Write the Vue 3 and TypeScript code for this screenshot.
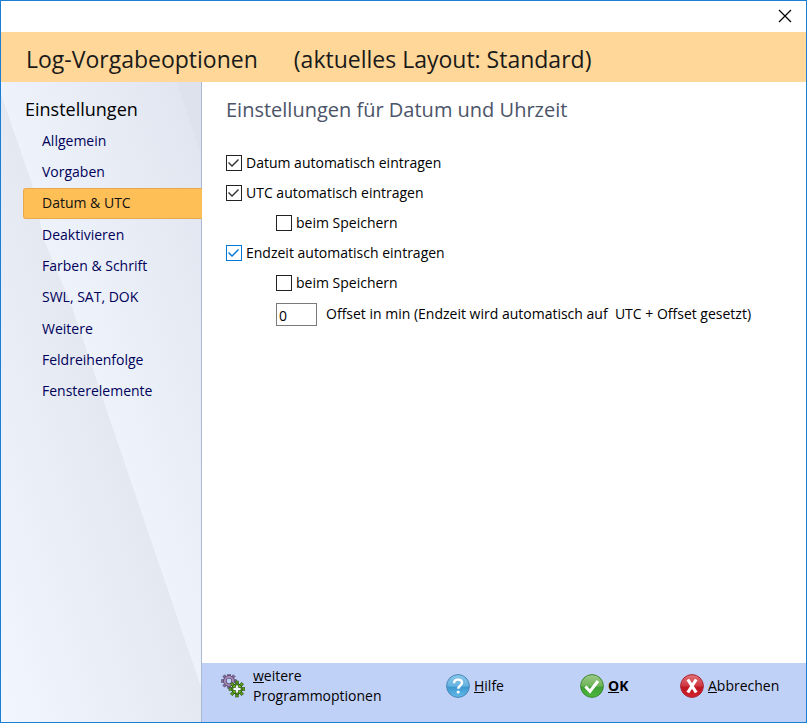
<script setup lang="ts">
import { ref } from 'vue'

const sections: string[] = [
  'Allgemein',
  'Vorgaben',
  'Datum & UTC',
  'Deaktivieren',
  'Farben & Schrift',
  'SWL, SAT, DOK',
  'Weitere',
  'Feldreihenfolge',
  'Fensterelemente',
]
const active = ref('Datum & UTC')

const autoDate = ref(true)
const autoUtc = ref(true)
const utcOnSave = ref(false)
const autoEnd = ref(true)
const endOnSave = ref(false)
const offset = ref('0')

const teeth: number[] = [0, 45, 90, 135, 180, 225, 270, 315]
</script>

<template>
  <div class="window">
    <div class="titlebar">
      <button class="close" type="button" aria-label="Schließen">
        <svg width="14" height="14" viewBox="0 0 14 14">
          <path d="M1 1L13 13M13 1L1 13" stroke="#000" stroke-width="1.2" fill="none" />
        </svg>
      </button>
    </div>

    <header class="banner">
      <h1>Log-Vorgabeoptionen</h1>
      <span>(aktuelles Layout: Standard)</span>
    </header>

    <div class="body">
      <aside class="sidebar">
        <svg class="backdrop" viewBox="0 0 200 640" preserveAspectRatio="none" aria-hidden="true">
          <defs>
            <linearGradient id="right" gradientUnits="userSpaceOnUse" x1="66" y1="210" x2="250" y2="148">
              <stop offset="0" stop-color="#edf2fb" />
              <stop offset="1" stop-color="#e0e4ee" />
            </linearGradient>
            <linearGradient id="left" gradientUnits="userSpaceOnUse" x1="-64" y1="452" x2="126" y2="388">
              <stop offset="0" stop-color="#f1f6ff" />
              <stop offset="1" stop-color="#e4e8f1" />
            </linearGradient>
          </defs>
          <rect width="200" height="640" fill="url(#right)" />
          <path d="M176 0H200V73Z" fill="#dde2ec" />
          <path d="M0 12L31 102L43 158L71 225L126 388L200 605V640H0Z" fill="url(#left)" />
        </svg>
        <h2>Einstellungen</h2>
        <nav>
          <a
            v-for="s in sections"
            :key="s"
            href="#"
            :class="{ active: s === active }"
            @click.prevent="active = s"
          >{{ s }}</a>
        </nav>
      </aside>

      <div class="content">
        <main>
          <h2>Einstellungen für Datum und Uhrzeit</h2>
          <form class="options" @submit.prevent>
            <label class="row"><input v-model="autoDate" type="checkbox" />Datum automatisch eintragen</label>
            <label class="row"><input v-model="autoUtc" type="checkbox" />UTC automatisch eintragen</label>
            <label class="row sub"><input v-model="utcOnSave" type="checkbox" />beim Speichern</label>
            <label class="row hot"><input v-model="autoEnd" type="checkbox" />Endzeit automatisch eintragen</label>
            <label class="row sub"><input v-model="endOnSave" type="checkbox" />beim Speichern</label>
            <div class="row sub offset">
              <input id="offset" v-model="offset" type="text" />
              <label for="offset">Offset in min (Endzeit wird automatisch auf&nbsp; UTC + Offset gesetzt)</label>
            </div>
          </form>
        </main>

        <footer>
          <button class="more" type="button">
            <svg width="24" height="24" viewBox="0 0 24 24">
              <g transform="translate(8 7)">
                <rect v-for="a in teeth" :key="a" x="-1.3" y="-7.5" width="2.6" height="4" fill="#86709a" stroke="#55436a" stroke-width=".6" :transform="`rotate(${a})`" />
                <circle r="4.1" fill="none" stroke="#55436a" stroke-width="3.4" />
                <circle r="4.1" fill="none" stroke="#a58cb8" stroke-width="2" />
              </g>
              <g transform="translate(16 15)">
                <rect v-for="a in teeth" :key="a" x="-1.4" y="-8" width="2.8" height="4" fill="#5a9a24" stroke="#2f5413" stroke-width=".6" :transform="`rotate(${a})`" />
                <circle r="5.2" fill="#6fc01c" stroke="#2f5413" stroke-width="1" />
                <path d="M-1.5 -4H1.5V-1.5H4V1.5H1.5V4H-1.5V1.5H-4V-1.5H-1.5Z" fill="#eef5ff" stroke="#2c5210" stroke-width=".7" />
              </g>
            </svg>
            <span><u>w</u>eitere<br />Programmoptionen</span>
          </button>

          <button type="button">
            <svg width="24" height="24" viewBox="0 0 24 24">
              <defs>
                <linearGradient id="blue" x1="0" y1="0" x2="0" y2="1">
                  <stop offset="0" stop-color="#8cc9ec" />
                  <stop offset=".5" stop-color="#65b3e0" />
                  <stop offset=".55" stop-color="#3d98d0" />
                  <stop offset="1" stop-color="#62bbe8" />
                </linearGradient>
              </defs>
              <circle cx="12" cy="12" r="11.4" fill="url(#blue)" stroke="#4886b5" />
              <path d="M8 9.2C8.1 6.8 9.7 5.6 12 5.6C14.3 5.6 16 6.9 16 8.8C16 11.4 12.3 11.6 12.3 14.8" fill="none" stroke="#fff" stroke-width="2.4" />
              <circle cx="12.2" cy="18" r="1.6" fill="#fff" />
            </svg>
            <span><u>H</u>ilfe</span>
          </button>

          <button class="ok" type="button">
            <svg width="24" height="24" viewBox="0 0 24 24">
              <defs>
                <linearGradient id="green" x1="0" y1="0" x2="0" y2="1">
                  <stop offset="0" stop-color="#9fca8a" />
                  <stop offset=".5" stop-color="#6eb457" />
                  <stop offset=".55" stop-color="#3f9f35" />
                  <stop offset="1" stop-color="#4db83c" />
                </linearGradient>
              </defs>
              <circle cx="12" cy="12" r="11.4" fill="url(#green)" stroke="#3f8a3a" />
              <path d="M5.5 12.5L10 17.5L18 7" fill="none" stroke="#fff" stroke-width="3" />
            </svg>
            <span><u>O</u>K</span>
          </button>

          <button type="button">
            <svg width="24" height="24" viewBox="0 0 24 24">
              <defs>
                <linearGradient id="red" x1="0" y1="0" x2="0" y2="1">
                  <stop offset="0" stop-color="#e2747b" />
                  <stop offset=".5" stop-color="#cf3640" />
                  <stop offset=".55" stop-color="#bd1722" />
                  <stop offset="1" stop-color="#d3222b" />
                </linearGradient>
              </defs>
              <circle cx="12" cy="12" r="11.4" fill="url(#red)" stroke="#a82732" />
              <path d="M7.8 5.5L16.2 18.5M16.2 5.5L7.8 18.5" fill="none" stroke="#fff" stroke-width="3.2" />
            </svg>
            <span><u>A</u>bbrechen</span>
          </button>
        </footer>
      </div>
    </div>
  </div>
</template>

<style>
body {
  margin: 0;
}
</style>

<style scoped>
.window {
  display: flex;
  flex-direction: column;
  box-sizing: border-box;
  min-height: 100vh;
  border: 1px solid #1a7fd4;
  background: #fff;
  color: #000;
  font: 14px/20px 'Open Sans', 'Noto Sans', sans-serif;
}

h1,
h2 {
  margin: 0;
  font-weight: 400;
}

button {
  padding: 0;
  border: 0;
  background: none;
  color: inherit;
  font: inherit;
  text-align: left;
}

.titlebar {
  display: flex;
  justify-content: flex-end;
  height: 31px;
  padding-right: 14px;
}

.close {
  display: flex;
  align-items: center;
  height: 30px;
}

.banner {
  display: flex;
  align-items: center;
  gap: 36px;
  box-sizing: border-box;
  height: 50px;
  padding: 4px 25px 0;
  background: #ffd899;
  color: #1a1a1a;
  font-size: 23px;
  line-height: 32px;
}

.banner h1 {
  font-size: 23px;
}

.body {
  display: flex;
  flex: 1;
}

.sidebar {
  position: relative;
  box-sizing: border-box;
  width: 201px;
  flex: none;
  padding: 12px 0 24px;
  border-right: 1px solid #abb9d3;
}

.backdrop {
  position: absolute;
  inset: 0;
  width: 100%;
  height: 100%;
}

.sidebar h2 {
  position: relative;
  padding-left: 24px;
  font-size: 18px;
  line-height: 31px;
}

nav {
  position: relative;
  display: grid;
  grid-auto-rows: 1fr;
  height: 282px;
  padding-left: 22px;
}

nav a {
  display: flex;
  align-items: center;
  box-sizing: border-box;
  margin-right: -1px;
  padding-left: 18px;
  border: 1px solid transparent;
  color: #00005a;
  text-decoration: none;
}

nav a.active {
  border-color: #e8a94c;
  border-right: 0;
  border-radius: 3px 0 0 3px;
  background: #ffbf57;
  color: #111;
}

.content {
  display: flex;
  flex: 1;
  flex-direction: column;
  min-width: 0;
}

main {
  flex: 1;
  padding: 12px 24px;
}

main h2 {
  color: #4b5468;
  font-size: 20px;
  line-height: 31px;
}

.options {
  margin-top: 23px;
}

.row {
  display: flex;
  align-items: center;
  gap: 4px;
  height: 30px;
  line-height: 22px;
}

.sub {
  padding-left: 50px;
}

input[type='checkbox'] {
  display: grid;
  box-sizing: border-box;
  width: 16px;
  height: 16px;
  margin: 0;
  border: 1px solid #222;
  background: #fff;
  color: #333;
  appearance: none;
}

input[type='checkbox']:checked::before {
  width: 14px;
  height: 14px;
  background: currentColor;
  clip-path: polygon(1px 7px, 2px 6px, 5px 9px, 11px 3px, 12px 4px, 5px 11px);
  content: '';
}

.hot input[type='checkbox'] {
  border-color: #0078d7;
  color: #0078d7;
}

.offset {
  gap: 9px;
  height: 32px;
}

.offset input {
  box-sizing: border-box;
  width: 41px;
  height: 23px;
  padding: 2px 2px 0;
  border: 1px solid #7a7a7a;
  background: #fff;
  color: #000;
  font: inherit;
}

footer {
  display: grid;
  grid-template-columns: 225fr 134fr 100fr 126fr;
  align-items: start;
  box-sizing: border-box;
  height: 59px;
  padding: 3px 0 0 19px;
  background: #c0d1f8;
}

footer button {
  display: flex;
  align-items: center;
  gap: 4px;
  height: 40px;
  white-space: nowrap;
}

footer .more {
  gap: 8px;
}

footer .ok {
  font-weight: 700;
}

footer svg {
  flex: none;
}
</style>
